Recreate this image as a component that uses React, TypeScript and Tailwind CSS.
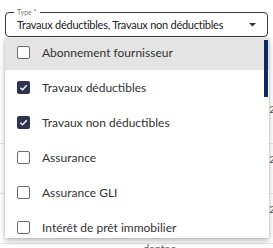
import React from "react";

const items = [
  { label: "Abonnement fournisseur", checked: false, hl: true },
  { label: "Travaux déductibles", checked: true },
  { label: "Travaux non déductibles", checked: true },
  { label: "Assurance", checked: false },
  { label: "Assurance GLI", checked: false },
  { label: "Intérêt de prêt immobilier", checked: false },
  { label: "Taxe foncière", checked: false },
];

function Box({ checked }: { checked: boolean }) {
  if (checked)
    return (
      <div className="w-[13px] h-[13px] rounded-[2px] bg-[#2f3350] flex items-center justify-center">
        <svg width="9" height="9" viewBox="0 0 10 10">
          <path d="M1.5 5.2 L4 7.6 L8.6 2.6" stroke="white" strokeWidth="1.6" fill="none" />
        </svg>
      </div>
    );
  return <div className="w-[13px] h-[13px] rounded-[2px] border-[1.5px] border-[#6b6b6b] bg-white" />;
}

export default function App() {
  return (
    <div
      className="relative w-[273px] h-[248px] bg-white overflow-hidden"
      style={{ fontFamily: "Lato, 'Noto Sans', sans-serif" }}
    >
      <div className="pt-[12px] pl-[5px] pr-[5px]">
        <div className="relative h-[25px] border border-[#3a3a3a] rounded-[4px] flex items-center pl-[11px] pr-[11px]">
          <span className="absolute left-[8px] top-[-6px] bg-white px-[3px] text-[7px] leading-[10px] text-[#7a7a7a]">
            Type *
          </span>
          <span className="flex-1 text-[11px] text-[#222] tracking-[-0.25px] whitespace-nowrap pt-[1px]">
            Travaux déductibles, Travaux non déductibles
          </span>
          <svg width="7" height="4" viewBox="0 0 7 4">
            <path d="M0 0 L7 0 L3.5 3.5 Z" fill="#333" />
          </svg>
        </div>
      </div>

      <div className="mt-[57px] flex flex-col">
        {["2", "2", "2"].map((t, i) => (
          <div key={i} className="h-[50px] border-b border-[#e6e6e6] flex items-start justify-end pt-[8px] text-[10px] text-[#555]">
            <span className="-mr-[2px]">{t}</span>
          </div>
        ))}
        <div className="pl-[143px] text-[11px] text-[#666] leading-[10px]">dantec</div>
      </div>

      <div className="absolute left-[5px] top-[38px] w-[264px] h-[200px] bg-white overflow-hidden shadow-[0_3px_6px_rgba(0,0,0,0.25),0_0_2px_rgba(0,0,0,0.15)]">
        <div className="-mt-[3px] flex flex-col">
          {items.map((it) => (
            <div
              key={it.label}
              className={`h-[35px] flex items-center pl-[12px] gap-[12px] shrink-0 ${it.hl ? "bg-[#e4e4e4]" : ""}`}
            >
              <Box checked={it.checked} />
              <span className="text-[12px] text-[#333] whitespace-nowrap">{it.label}</span>
            </div>
          ))}
        </div>
        <div className="absolute right-[1px] top-[2px] w-[4px] h-[57px] bg-[#0d2a5e]" />
      </div>
    </div>
  );
}
